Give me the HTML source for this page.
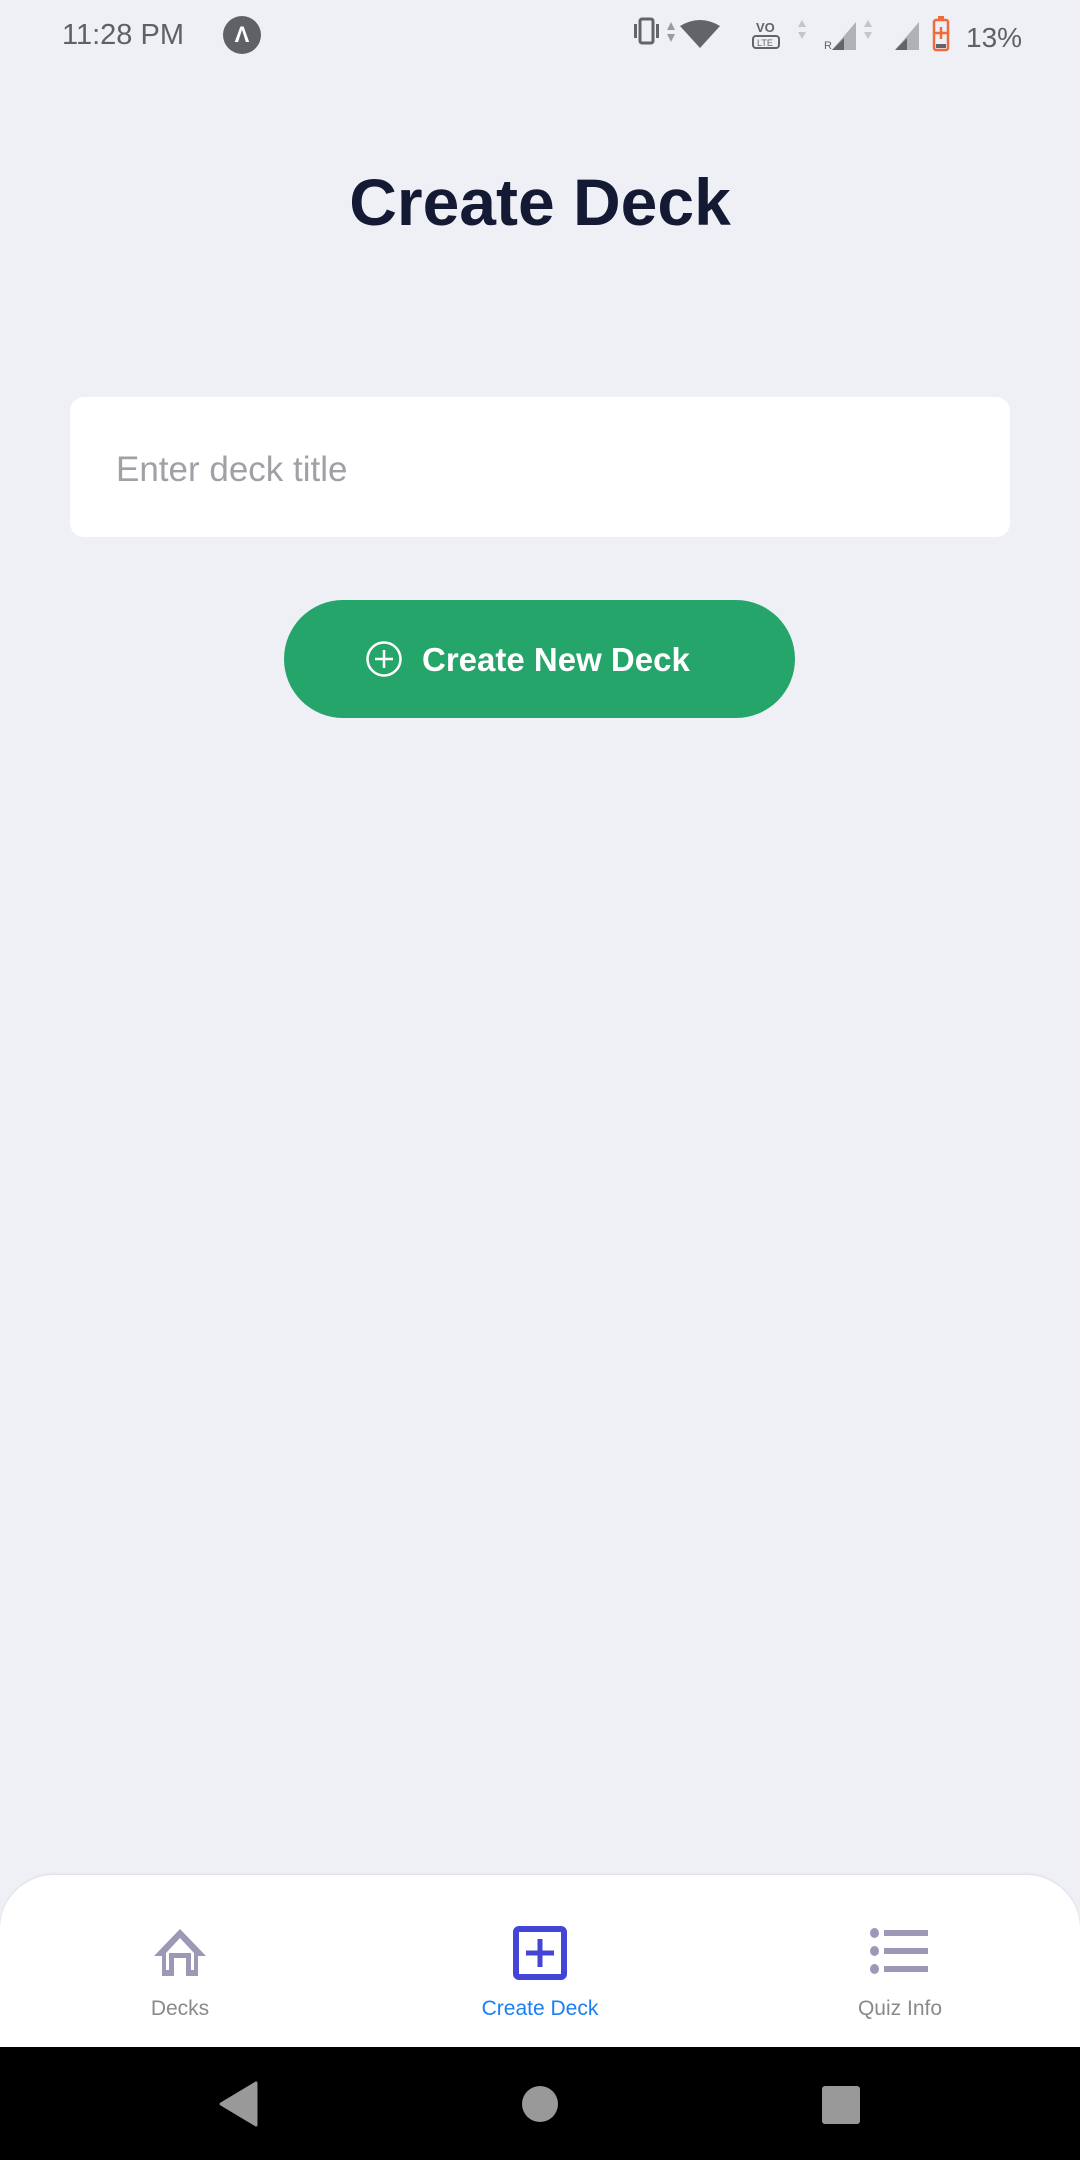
<!DOCTYPE html>
<html><head><meta charset="utf-8"><style>
*{margin:0;padding:0;box-sizing:border-box}
body{width:1080px;height:2160px;background:#eef0f5;font-family:"Liberation Sans",Roboto,sans-serif;position:relative;overflow:hidden}
.abs{position:absolute}
</style></head><body>
<div class="abs" style="left:62px;top:16px;font-size:29px;color:#5f6166;line-height:38px">11:28 PM</div>
<div class="abs" style="left:223px;top:16px;width:38px;height:38px;border-radius:50%;background:#5f6166;color:#fff;font-size:22px;font-weight:bold;text-align:center;line-height:38px">Λ</div>
<svg class="abs" style="left:630px;top:14px" width="400" height="42" viewBox="0 0 400 42">
<g fill="#636469">
<rect x="4" y="10" width="3" height="14"/><rect x="10" y="5" width="13" height="24" rx="2" fill="none" stroke="#636469" stroke-width="3"/><rect x="26" y="10" width="3" height="14"/>
<path d="M37 16l4-8 4 8z" opacity=".6"/><path d="M37 20l4 8 4-8z" opacity=".6"/>
<path d="M50 12 Q 70 0 90 12 L70 34z"/>
<text x="126" y="18" font-size="13" font-weight="bold" font-family="Liberation Sans">VO</text>
<rect x="123" y="22" width="26" height="12" rx="3" fill="none" stroke="#636469" stroke-width="2"/><text x="127" y="32" font-size="9" font-family="Liberation Sans">LTE</text>
<path d="M168 13l4-7 4 7z M168 18l4 7 4-7z" opacity=".3"/>
<text x="194" y="35" font-size="11" font-family="Liberation Sans">R</text>
<path d="M202 36 L226 8 V36z" opacity=".45"/><path d="M202 36 L214 24 V36z"/>
<path d="M234 13l4-7 4 7z M234 18l4 7 4-7z" opacity=".3"/>
<path d="M265 36 L289 8 V36z" opacity=".45"/><path d="M265 36 L277 24 V36z"/>
</g>
<rect x="304" y="6" width="14" height="30" rx="2" fill="none" stroke="#f06a3c" stroke-width="2.5"/><rect x="308" y="2" width="6" height="4" fill="#f06a3c"/>
<path d="M311 13v12M305 19h12" stroke="#f06a3c" stroke-width="2.5"/><rect x="306" y="30" width="10" height="4" fill="#636469"/>
<text x="336" y="33" font-size="28" fill="#5f6166" font-family="Liberation Sans">13%</text>
</svg>
<div class="abs" style="left:0;width:1080px;top:163px;text-align:center;font-size:66px;font-weight:bold;color:#141a33;line-height:78px">Create Deck</div>
<div class="abs" style="left:70px;top:397px;width:940px;height:140px;background:#fff;border-radius:14px"></div>
<div class="abs" style="left:116px;top:448px;font-size:35px;color:#a0a0a6;line-height:44px">Enter deck title</div>
<div class="abs" style="left:284px;top:600px;width:511px;height:118px;background:#26a56b;border-radius:59px"></div>
<svg class="abs" style="left:364px;top:639px" width="40" height="40" viewBox="0 0 40 40"><circle cx="20" cy="20" r="16.5" fill="none" stroke="#fff" stroke-width="2.5"/><path d="M20 11v18M11 20h18" stroke="#fff" stroke-width="2.5"/></svg>
<div class="abs" style="left:422px;top:640px;font-size:33px;font-weight:bold;color:#fff;line-height:40px">Create New Deck</div>
<div class="abs" style="left:0;top:1875px;width:1080px;height:180px;background:#fff;border-radius:54px 54px 0 0;box-shadow:0 -1px 2px rgba(0,0,0,.08)"></div>
<svg class="abs" style="left:150px;top:1926px" width="60" height="52" viewBox="0 0 60 52"><path d="M30 3 L4 30 H12 V50 H24 V32 H36 V50 H48 V30 H56 Z M30 12 L44 27 V44 H41 V27 H19 V44 H16 V27 Z" fill="#9b99b5" fill-rule="evenodd"/></svg>
<svg class="abs" style="left:513px;top:1926px" width="54" height="54" viewBox="0 0 54 54"><rect x="3" y="3" width="48" height="48" rx="3" fill="none" stroke="#4444d6" stroke-width="6"/><path d="M27 13v28M13 27h28" stroke="#4444d6" stroke-width="5"/></svg>
<svg class="abs" style="left:870px;top:1928px" width="58" height="48" viewBox="0 0 58 48"><g fill="#9b99b5"><ellipse cx="4.5" cy="5" rx="4.5" ry="5"/><ellipse cx="4.5" cy="23" rx="4.5" ry="5"/><ellipse cx="4.5" cy="41" rx="4.5" ry="5"/><rect x="14" y="2" width="44" height="6"/><rect x="14" y="20" width="44" height="6"/><rect x="14" y="38" width="44" height="6"/></g></svg>
<div class="abs" style="left:80px;width:200px;top:1997px;text-align:center;font-size:21px;color:#8a8a8e">Decks</div>
<div class="abs" style="left:440px;width:200px;top:1997px;text-align:center;font-size:21px;color:#1a7ef5">Create Deck</div>
<div class="abs" style="left:800px;width:200px;top:1997px;text-align:center;font-size:21px;color:#8a8a8e">Quiz Info</div>
<div class="abs" style="left:0;top:2047px;width:1080px;height:113px;background:#000"></div>
<svg class="abs" style="left:0;top:2047px" width="1080" height="113"><path d="M256 36 V78 L221 57 Z" fill="#999" stroke="#999" stroke-width="3" stroke-linejoin="round"/><circle cx="540" cy="57" r="18" fill="#999"/><rect x="822" y="39" width="38" height="38" rx="3" fill="#999"/></svg>
</body></html>
